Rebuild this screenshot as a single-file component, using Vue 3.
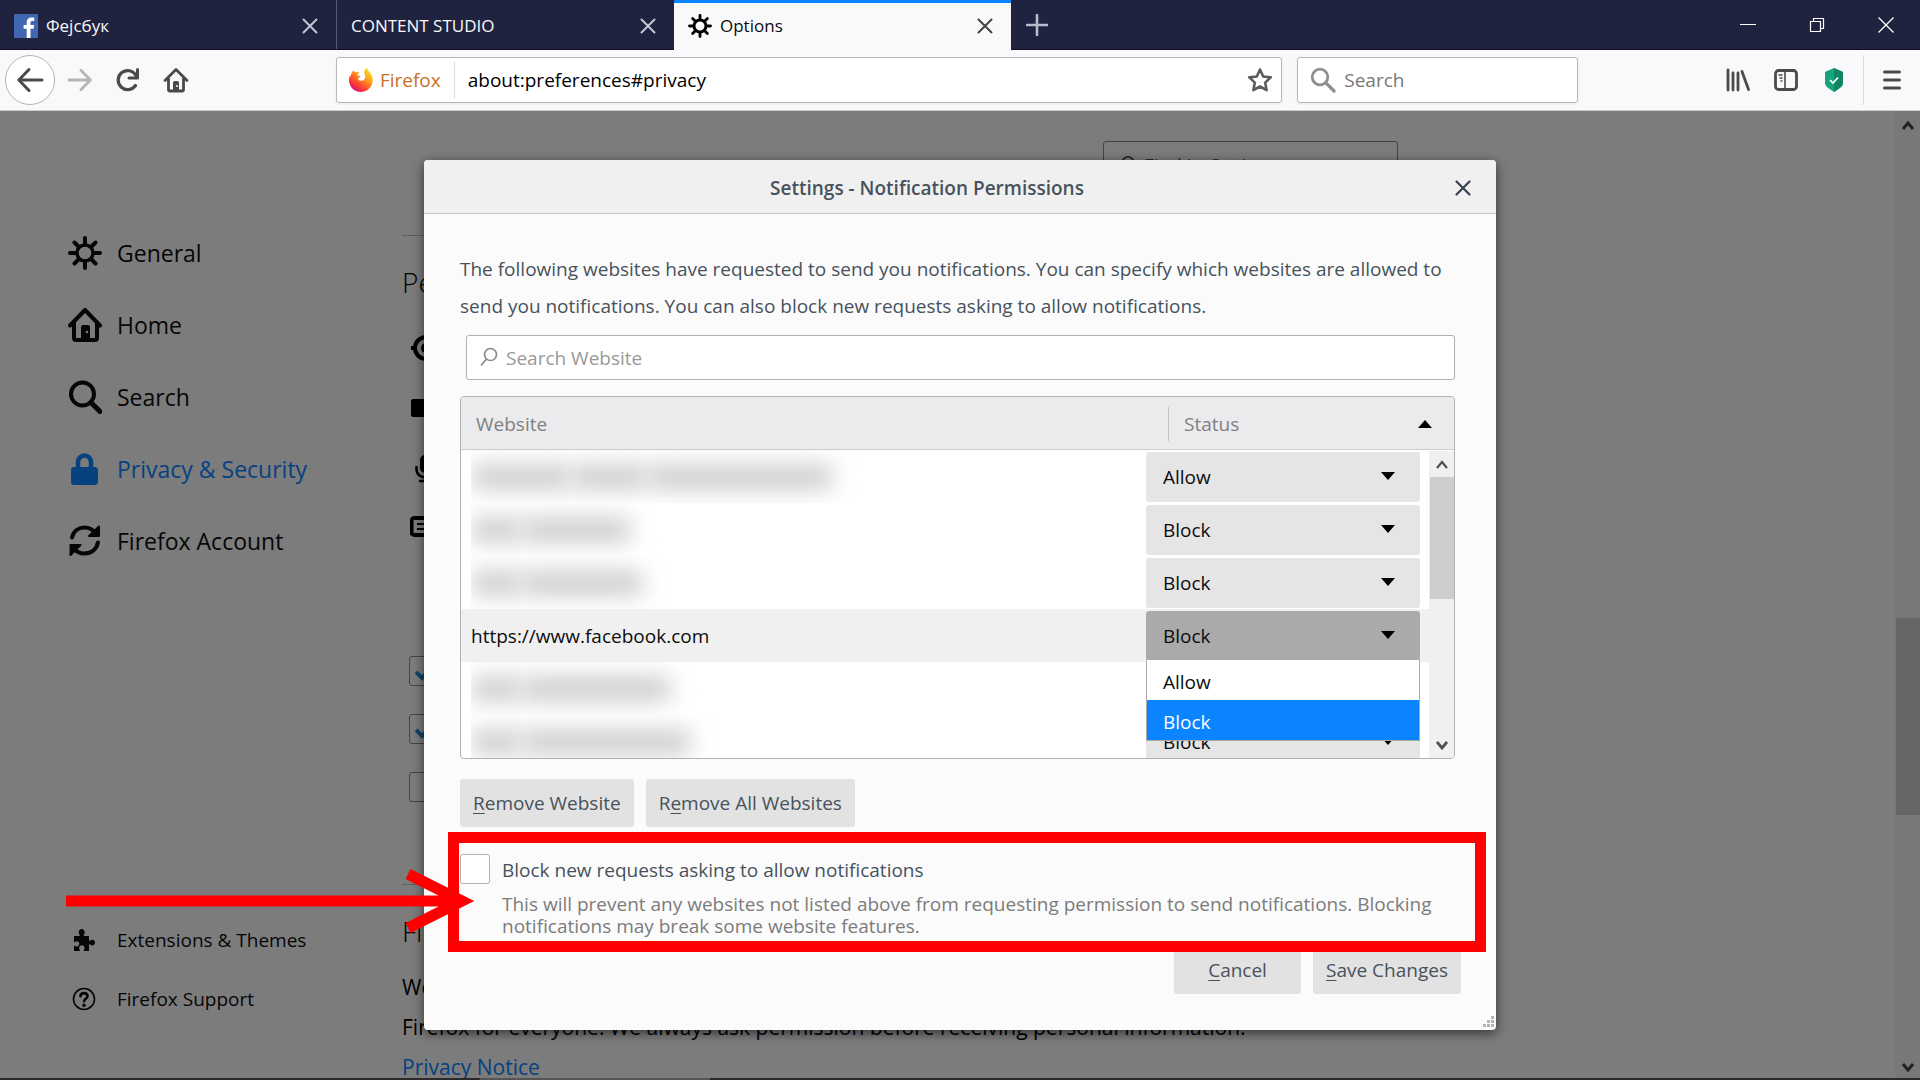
<template>
  <div class="browser">
    <header class="tab-bar">
      <div
        v-for="tab in tabs"
        :key="tab.title"
        :class="['tab', tab.active ? 'active' : '']"
      >
        <svg v-if="tab.icon === 'facebook'" class="favicon" viewBox="0 0 24 24">
          <rect width="24" height="24" rx="1" fill="#4267b2" />
          <path d="M16.5 24v-9.3h3.1l.5-3.6h-3.6V8.8c0-1 .3-1.8 1.8-1.8h1.9V3.7c-.3 0-1.5-.1-2.8-.1-2.8 0-4.7 1.7-4.7 4.8v2.7H9.6v3.6h3.1V24z" fill="#fff" />
        </svg>
        <svg v-if="tab.icon === 'gear'" class="favicon" viewBox="0 0 24 24">
          <circle cx="12" cy="12" r="6" fill="none" stroke="#000" stroke-width="3" />
          <path :d="gearTeeth" stroke="#000" stroke-width="2.8" stroke-linecap="round" />
        </svg>
        <span class="tab-title">{{ tab.title }}</span>
        <button class="tab-close" aria-label="Close tab">
          <svg width="16" height="16" viewBox="0 0 16 16">
            <path d="M1.5 1.5l13 13M14.5 1.5l-13 13" fill="none" stroke="currentColor" stroke-width="2" stroke-linecap="round" />
          </svg>
        </button>
      </div>
      <button class="new-tab" aria-label="New tab">
        <svg width="22" height="22" viewBox="0 0 22 22">
          <path d="M11 1v20M1 11h20" stroke="#b9bacb" stroke-width="2.6" stroke-linecap="round" />
        </svg>
      </button>
      <div class="window-controls">
        <button aria-label="Minimize">
          <svg width="16" height="16" viewBox="0 0 16 16"><path d="M0 7.5h16" stroke="#fff" /></svg>
        </button>
        <button aria-label="Restore">
          <svg width="16" height="16" viewBox="0 0 16 16">
            <path d="M1.5 4.5h10v10h-10zM4.5 4.5v-3h10v10h-3" fill="none" stroke="#fff" stroke-width="1.2" />
          </svg>
        </button>
        <button aria-label="Close">
          <svg width="16" height="16" viewBox="0 0 16 16"><path d="M.5.5l15 15M15.5.5l-15 15" stroke="#fff" stroke-width="1.3" /></svg>
        </button>
      </div>
    </header>

    <nav class="nav-bar">
      <button class="nav-button back" aria-label="Back">
        <svg width="28" height="28" viewBox="0 0 28 28">
          <path d="M26 14H3M13 3.5L2.8 14 13 24.5" fill="none" stroke="#4a4a4c" stroke-width="3" stroke-linecap="round" stroke-linejoin="round" />
        </svg>
      </button>
      <button class="nav-button" aria-label="Forward" disabled>
        <svg width="26" height="26" viewBox="0 0 28 28">
          <path d="M2 14h23M15 3.5L25.2 14 15 24.5" fill="none" stroke="#b5b5b7" stroke-width="3" stroke-linecap="round" stroke-linejoin="round" />
        </svg>
      </button>
      <button class="nav-button" aria-label="Reload">
        <svg width="26" height="26" viewBox="0 0 26 26">
          <path d="M20.5 18.5A9.5 9.5 0 1 1 21 8.5" fill="none" stroke="#4a4a4c" stroke-width="3.2" stroke-linecap="round" />
          <path d="M22.5 2.5v8.5h-8.5" fill="none" stroke="#4a4a4c" stroke-width="3" stroke-linecap="round" stroke-linejoin="round" />
        </svg>
      </button>
      <button class="nav-button" aria-label="Home">
        <svg width="26" height="26" viewBox="0 0 26 26">
          <path d="M2 13.5L13 2.5l11 11M5.5 12v10.5q0 1.5 1.5 1.5h12q1.5 0 1.5-1.5V12" fill="none" stroke="#4a4a4c" stroke-width="2.8" stroke-linecap="round" stroke-linejoin="round" />
          <path d="M10 23v-7.5q0-1.5 1.5-1.5h3q1.5 0 1.5 1.5V23z" fill="#4a4a4c" />
          <circle cx="14" cy="19" r="1" fill="#f9f9fb" />
        </svg>
      </button>
      <div class="spacer"></div>
      <div class="url-bar">
        <svg class="firefox-logo" viewBox="0 0 26 26">
          <defs>
            <linearGradient id="fox" x1="0.85" y1="0.05" x2="0.25" y2="0.95">
              <stop offset="0" stop-color="#ffe226" />
              <stop offset="0.4" stop-color="#ff9a1a" />
              <stop offset="0.7" stop-color="#ff4a2e" />
              <stop offset="1" stop-color="#e01171" />
            </linearGradient>
          </defs>
          <path d="M5.5 3.5c.8 1 1.8 1.5 3 1.8 1.3-.5 2-.4 3.2-.3-1.5 1-2.2 2-2.3 3.4l3 .5c.2 1.2-1.6 1.9-2.5 2.7.3 1.6 2 2.5 3.8 2.2 2.2-.3 3.5-1.9 3.5-3.9 0-2.2-1.4-3.3-1-5.6.2-1.8 1.6-3 3.2-3.6-.2 1.9 1 2.9 2.3 4.5 1.9 2.4 3 4.9 3 8 0 6.4-5.2 11.8-11.9 11.8S1 19.7 1 13.3c0-2 .4-3.4 1.1-5l.4 1.4c.4-2.6 1.4-4.4 3-6.2z" fill="url(#fox)" />
        </svg>
        <span class="identity">Firefox</span>
        <input class="url" type="text" aria-label="Address" value="about:preferences#privacy" />
        <button class="bookmark" aria-label="Bookmark">
          <svg width="26" height="26" viewBox="0 0 26 26">
            <path d="M13 2.5l3.2 7 7.5.9-5.5 5.2 1.4 7.6-6.6-3.7-6.6 3.7 1.4-7.6-5.5-5.2 7.5-.9z" fill="none" stroke="#5c5c5e" stroke-width="2.6" stroke-linejoin="round" />
          </svg>
        </button>
      </div>
      <div class="search-bar">
        <svg width="26" height="26" viewBox="0 0 26 26">
          <circle cx="10" cy="10" r="7.8" fill="none" stroke="#8f8f91" stroke-width="2.8" />
          <path d="M16 16l8 8" stroke="#8f8f91" stroke-width="3.2" stroke-linecap="round" />
        </svg>
        <input type="text" aria-label="Search the web" placeholder="Search" />
      </div>
      <div class="spacer"></div>
      <button class="tool" aria-label="Library">
        <svg width="24" height="24" viewBox="0 0 24 24">
          <path d="M2 2v20M7 5v17M12 5v17M16 3.5l6.5 18" stroke="#4a4a4c" stroke-width="2.8" stroke-linecap="round" />
        </svg>
      </button>
      <button class="tool" aria-label="Sidebars">
        <svg width="24" height="24" viewBox="0 0 24 24">
          <rect x="1.5" y="2.5" width="21" height="19" rx="3" fill="none" stroke="#4a4a4c" stroke-width="2.8" />
          <path d="M11 3v18" stroke="#4a4a4c" stroke-width="1.6" />
          <path d="M4.5 7h4M5.5 10h3M6.5 13h2" stroke="#4a4a4c" stroke-width="1.5" />
        </svg>
      </button>
      <button class="tool" aria-label="Protection">
        <svg width="20" height="24" viewBox="0 0 20 24">
          <path d="M10 0l9 4v11.5q0 3-9 8.5-9-5.5-9-8.5V4z" fill="#14a57c" />
          <path d="M10 0l9 4v11.5q0 3-9 8.5z" fill="#128466" />
          <path d="M6 12l3 3 5-5.5" fill="none" stroke="#fff" stroke-width="1.7" />
        </svg>
      </button>
      <button class="menu" aria-label="Menu">
        <svg width="18" height="20" viewBox="0 0 18 20">
          <path d="M1.5 2h15M1.5 10h15M1.5 18h15" stroke="#4a4a4c" stroke-width="3" stroke-linecap="round" />
        </svg>
      </button>
    </nav>

    <div class="content">
      <aside class="categories">
        <a
          v-for="item in categories"
          :key="item.label"
          href="#"
          :class="['category', item.selected ? 'selected' : '']"
        >
          <svg v-if="item.icon === 'gear'" viewBox="0 0 34 34">
            <circle cx="17" cy="17" r="8" fill="none" stroke="currentColor" stroke-width="3.5" />
            <path d="M17 2v6M17 26v6M2 17h6M26 17h6M6.5 6.5l4 4M23.5 23.5l4 4M6.5 27.5l4-4M23.5 10.5l4-4" stroke="currentColor" stroke-width="4" stroke-linecap="round" />
          </svg>
          <svg v-if="item.icon === 'home'" viewBox="0 0 34 34">
            <path d="M2 17.5L17 2l15 15.5M6 15v15q0 2 2 2h19q2 0 2-2V15" fill="none" stroke="currentColor" stroke-width="4" stroke-linecap="round" stroke-linejoin="round" />
            <path d="M13 32V19q0-2 2-2h5q2 0 2 2v13z" fill="currentColor" />
            <circle cx="19" cy="24" r="1.3" fill="#f9f9fb" />
          </svg>
          <svg v-if="item.icon === 'search'" viewBox="0 0 34 34">
            <circle cx="14.5" cy="14" r="11.5" fill="none" stroke="currentColor" stroke-width="4" />
            <path d="M23 22.5l9 9" stroke="currentColor" stroke-width="5" stroke-linecap="round" />
          </svg>
          <svg v-if="item.icon === 'lock'" viewBox="0 0 34 34">
            <path d="M10 17V10a6.5 6.5 0 0 1 13 0v7" fill="none" stroke="currentColor" stroke-width="4.5" />
            <rect x="3" y="15" width="27" height="18" rx="3" fill="currentColor" />
          </svg>
          <svg v-if="item.icon === 'sync'" viewBox="0 0 34 34">
            <path d="M4 13.5C5.5 7 10.5 3.5 16.5 3.5c5 0 8.500 2 11.500 6M30 18.500c-1.500 7-7 11-13.500 11-5 0-8.500-2-11.500-6" fill="none" stroke="currentColor" stroke-width="4" stroke-linecap="round" />
            <path d="M21 12h10V2.500zM12.500 21h-10v10z" fill="currentColor" stroke="currentColor" stroke-width="2" stroke-linejoin="round" />
          </svg>
          <span>{{ item.label }}</span>
        </a>
        <div class="links">
          <a href="#" class="link">
            <svg viewBox="0 0 24 24">
              <path d="M2 8h5.5c1-.8-.8-2-.8-3.8C6.7 2.5 8 1 9.7 1s3 1.5 3 3.2c0 1.800-1.700 3-.7 3.800h5v4.500c.8 1 1.700-.8 3.400-.8 1.500 0 2.600 1.200 2.600 2.800s-1.100 2.900-2.600 2.900c-1.700 0-2.600-1.700-3.400-.8V23h-5c-1-.8.5-1.800.5-3.300 0-1.400-1.200-2.500-2.700-2.500s-2.700 1.100-2.700 2.500c0 1.500 1.400 2.500.5 3.300H2v-5c.8-1 1.500.4 2.800.4 1.400 0 2.500-1.200 2.500-2.600s-1.100-2.600-2.500-2.600c-1.300 0-2 1.500-2.800.6z" fill="currentColor" />
            </svg>
            <span>Extensions &amp; Themes</span>
          </a>
          <a href="#" class="link">
            <svg viewBox="0 0 24 24">
              <circle cx="12" cy="12" r="10.5" fill="none" stroke="currentColor" stroke-width="1.6" />
              <path d="M8.5 9.3c0-4.3 7-4.3 7 0 0 2.5-3.4 2.5-3.4 5" fill="none" stroke="currentColor" stroke-width="2.6" stroke-linecap="round" />
              <circle cx="12" cy="18.2" r="1.8" fill="currentColor" />
            </svg>
            <span>Firefox Support</span>
          </a>
        </div>
      </aside>

      <main class="pane">
        <label class="find">
          <svg width="18" height="18" viewBox="0 0 18 18">
            <circle cx="10" cy="7" r="6" fill="none" stroke="#555" stroke-width="2" />
            <path d="M6 11.5l-5 5" stroke="#555" stroke-width="2" />
          </svg>
          <input type="text" placeholder="Find in Options" />
        </label>
        <section class="group">
          <h2>Permissions</h2>
          <div class="permission">
            <svg width="32" height="32" viewBox="0 0 32 32">
              <circle cx="16" cy="16" r="11" fill="none" stroke="#000" stroke-width="4" />
              <circle cx="16" cy="16" r="5" />
              <path d="M16 1v5M16 26v5M1 16h5M26 16h5" stroke="#000" stroke-width="4" />
            </svg>
          </div>
          <div class="permission">
            <svg width="32" height="32" viewBox="0 0 32 32"><rect x="1" y="7" width="22" height="18" rx="2" /><path d="M23 14l8-6v16l-8-6z" /></svg>
          </div>
          <div class="permission">
            <svg width="32" height="32" viewBox="0 0 32 32">
              <rect x="10" y="3" width="10" height="18" rx="5" />
              <path d="M6.5 14v3c0 11 17 11 17 0v-3M15 25v4M9 29h12" fill="none" stroke="#000" stroke-width="2.5" />
            </svg>
          </div>
          <div class="permission">
            <svg width="32" height="32" viewBox="0 0 32 32">
              <rect x="1.5" y="6" width="28" height="17" rx="3" fill="none" stroke="#000" stroke-width="4" />
              <path d="M7 12h16M7 17h12" stroke="#000" stroke-width="2" />
            </svg>
          </div>
        </section>
        <section class="options">
          <div v-for="(checked, i) in pageOptions" :key="i" class="option">
            <input type="checkbox" :checked="checked" :aria-label="'Option ' + (i + 1)" />
            <svg v-if="checked" class="check" width="18" height="16" viewBox="0 0 18 16">
              <path d="M1 6l6 6 10-10" fill="none" stroke="#1c8fd0" stroke-width="4" />
            </svg>
          </div>
        </section>
        <section class="group">
          <h2>Firefox Data Collection and Use</h2>
          <p>
            We strive to provide you with choices and collect only what we need to provide and improve<br />
            Firefox for everyone. We always ask permission before receiving personal information.<br />
            <a href="#">Privacy Notice</a>
          </p>
        </section>
      </main>

      <div class="page-scroll">
        <svg width="12" height="10" viewBox="0 0 12 10"><path d="M1 8l5-6 5 6" fill="none" stroke="#444" stroke-width="3" /></svg>
        <div class="page-thumb"></div>
        <svg width="12" height="10" viewBox="0 0 12 10"><path d="M1 2l5 6 5-6" fill="none" stroke="#444" stroke-width="3" /></svg>
      </div>

      <div class="overlay">
        <div class="dialog" role="dialog" aria-labelledby="dialog-title">
          <div class="dialog-header">
            <h1 id="dialog-title">Settings - Notification Permissions</h1>
            <button aria-label="Close dialog">
              <svg width="16" height="16" viewBox="0 0 16 16"><path d="M1.5 1.5l13 13M14.5 1.5l-13 13" stroke="#38424d" stroke-width="2.2" stroke-linecap="round" /></svg>
            </button>
          </div>
          <div class="dialog-body">
            <p class="intro">
              The following websites have requested to send you notifications. You can specify which websites are allowed to send you notifications. You can also block new requests asking to allow notifications.
            </p>
            <label class="site-search">
              <svg width="18" height="22" viewBox="0 0 18 22">
                <circle cx="10.5" cy="7.5" r="6" fill="none" stroke="#8a8a8c" stroke-width="1.7" />
                <path d="M6.5 12L1 18.5" stroke="#8a8a8c" stroke-width="1.7" />
              </svg>
              <input type="text" placeholder="Search Website" />
            </label>

            <div class="site-list">
              <table>
                <colgroup>
                  <col />
                  <col class="col-status" />
                  <col class="col-scroll" />
                </colgroup>
                <thead>
                  <tr>
                    <th>Website</th>
                    <th colspan="2">
                      <div class="status-head">
                        <span>Status</span>
                        <svg width="14" height="8" viewBox="0 0 14 8"><path d="M0 8l7-8 7 8z" /></svg>
                      </div>
                    </th>
                  </tr>
                </thead>
                <tbody>
                  <tr v-for="(site, i) in sites" :key="i" :class="{ selected: site.url }">
                    <td>
                      <span v-if="site.url">{{ site.url }}</span>
                      <div v-else class="hidden-site">
                        <i v-for="(w, n) in site.bars" :key="n" :style="{ width: w + 'px' }"></i>
                      </div>
                    </td>
                    <td class="status">
                      <select :aria-label="'Status ' + (i + 1)" :value="site.status">
                        <option>Allow</option>
                        <option>Block</option>
                      </select>
                      <svg class="caret" width="14" height="8" viewBox="0 0 14 8"><path d="M0 0h14l-7 8z" /></svg>
                      <ul v-if="site.url" class="popup" role="listbox" aria-label="Status">
                        <li role="option">Allow</li>
                        <li role="option" class="current" aria-selected="true">Block</li>
                      </ul>
                    </td>
                    <td></td>
                  </tr>
                </tbody>
              </table>
              <div class="list-scroll">
                <svg width="12" height="10" viewBox="0 0 12 10"><path d="M1 8l5-6 5 6" fill="none" stroke="#505050" stroke-width="2.2" /></svg>
                <div class="list-thumb"></div>
                <svg width="12" height="10" viewBox="0 0 12 10"><path d="M1 2l5 6 5-6" fill="none" stroke="#505050" stroke-width="2.8" /></svg>
              </div>
            </div>

            <div class="buttons">
              <button><u>R</u>emove Website</button>
              <button>R<u>e</u>move All Websites</button>
            </div>

            <div class="block-new">
              <input id="block-new" type="checkbox" />
              <div>
                <label for="block-new">Block new requests asking to allow notifications</label>
                <p>This will prevent any websites not listed above from requesting permission to send notifications. Blocking notifications may break some website features.</p>
              </div>
              <div class="highlight"></div>
              <svg class="arrow" width="410" height="70" viewBox="0 0 410 70">
                <path d="M0 35h392M342 8l54 27-54 27" fill="none" stroke="#f00" stroke-width="11" />
              </svg>
            </div>

            <div class="buttons end">
              <button class="cancel"><u>C</u>ancel</button>
              <button><u>S</u>ave Changes</button>
            </div>
          </div>
          <svg class="grip" width="12" height="12" viewBox="0 0 12 12">
            <path d="M9 0h3v3h-3zM9 4h3v3h-3zM9 8h3v3h-3zM5 4h3v3h-3zM5 8h3v3h-3zM1 8h3v3h-3z" fill="#b5b5b5" />
          </svg>
        </div>
      </div>
    </div>
    <footer class="edge"></footer>
  </div>
</template>

<script setup>
const tabs = [
  { title: 'Фејсбук', icon: 'facebook' },
  { title: 'CONTENT STUDIO' },
  { title: 'Options', icon: 'gear', active: true }
];

const gearTeeth = 'M12 1.5v4M12 18.5v4M1.5 12h4M18.5 12h4M4.6 4.6l2.5 2.5M16.9 16.9l2.5 2.5M4.6 19.4l2.5-2.5M16.9 7.1l2.5-2.5';

const categories = [
  { label: 'General', icon: 'gear' },
  { label: 'Home', icon: 'home' },
  { label: 'Search', icon: 'search' },
  { label: 'Privacy & Security', icon: 'lock', selected: true },
  { label: 'Firefox Account', icon: 'sync' }
];

const pageOptions = [true, true, false];

// bars are the widths of the blurred words
const sites = [
  { bars: [100, 76, 186], status: 'Allow' },
  { bars: [50, 110], status: 'Block' },
  { bars: [50, 122], status: 'Block' },
  { url: 'https://www.facebook.com', status: 'Block' },
  { bars: [50, 150], status: 'Block' },
  { bars: [50, 170], status: 'Block' }
];
</script>

<style>
body {
  margin: 0;
}
</style>

<style scoped>
.browser {
  display: flex;
  flex-direction: column;
  height: 100vh;
  overflow: hidden;
  font-family: "Open Sans", "Noto Sans", sans-serif;
  font-size: 19px;
  color: #000;
}

.browser * {
  box-sizing: border-box;
}

button,
input,
select {
  font: inherit;
  color: inherit;
}

button {
  padding: 0;
  border: none;
  background: none;
}

input {
  min-width: 0;
  padding: 0;
  border: none;
  outline: none;
  background: none;
}

svg {
  display: block;
  flex: none;
}

.tab-bar {
  display: flex;
  flex: none;
  height: 50px;
  background-color: #20233f;
  border-bottom: 1px solid #0f1028;
  color: #f9f9fa;
  font-size: 17px;
}

.tab {
  display: flex;
  align-items: center;
  gap: 8px;
  width: 337px;
  padding: 2px 18px 0 14px;
  border-right: 1px solid #5a5c74;
}

.tab.active {
  height: 50px;
  padding: 0 18px 2px 14px;
  background-color: #f9f9fb;
  border-top: 3px solid #0a84ff;
  border-right: none;
  color: #0c0c0d;
}

.tab:nth-child(2) {
  border-right: none;
}

.favicon {
  width: 24px;
  height: 24px;
}

.tab-title {
  flex: 1;
}

.tab-close {
  color: #c4c5d3;
}

.active .tab-close {
  color: #444;
}

.new-tab {
  margin-left: 15px;
}

.window-controls {
  display: flex;
  margin-left: auto;
}

.window-controls button {
  display: flex;
  align-items: center;
  justify-content: center;
  width: 69px;
}

.nav-bar {
  display: flex;
  flex: none;
  align-items: center;
  height: 61px;
  padding-left: 5px;
  background-color: #f9f9fb;
  border-bottom: 1px solid #ccc;
}

.nav-button,
.tool,
.menu {
  display: flex;
  align-items: center;
  justify-content: center;
  width: 48px;
  height: 50px;
}

.back {
  width: 50px;
  margin-right: 1px;
  border: 1px solid #b5b5ad;
  border-radius: 50%;
  background-color: #fff;
}

.spacer {
  flex: 136;
}

.url-bar,
.search-bar {
  display: flex;
  align-items: center;
  min-width: 0;
  height: 46px;
  background-color: #fff;
  border: 1px solid #b8b8b4;
  border-radius: 3px;
  box-shadow: 0 1px 3px rgba(0, 0, 0, 0.06);
}

.url-bar {
  flex: 926;
  padding: 0 8px 0 11px;
}

.firefox-logo {
  width: 26px;
  height: 26px;
}

.identity {
  padding: 6px 13px 6px 6px;
  border-right: 1px solid #ddd;
  color: #c9712b;
}

.url {
  flex: 1;
  padding-left: 13px;
}

.search-bar {
  flex: 255;
  gap: 8px;
  margin-left: 15px;
  padding: 0 12px;
}

.search-bar input {
  flex: 1;
}

.search-bar input::placeholder {
  color: #777;
  opacity: 1;
}

.menu {
  width: 57px;
  margin-left: 5px;
  border-left: 1px solid #ddd;
}

.content {
  position: relative;
  display: flex;
  flex: 1;
  min-height: 0;
  overflow: hidden;
  background-color: #f9f9fb;
}

.categories {
  display: flex;
  flex: 0 0 402px;
  flex-direction: column;
  padding: 106px 0 50px 68px;
}

.category,
.link {
  display: flex;
  align-items: center;
  color: #0c0c0d;
  text-decoration: none;
}

.category {
  gap: 15px;
  height: 72px;
  font-size: 23px;
}

.category svg {
  width: 34px;
  height: 34px;
}

.category.selected {
  color: #0a84ff;
}

.links {
  margin-top: auto;
}

.link {
  gap: 21px;
  height: 59px;
  padding-left: 4px;
}

.link svg {
  width: 24px;
  height: 24px;
}

.pane {
  flex: 0 1 996px;
  height: 0;
  white-space: nowrap;
}

.find {
  display: flex;
  align-items: center;
  gap: 8px;
  width: 295px;
  height: 48px;
  margin: 30px 0 46px auto;
  padding: 0 14px;
  border: 1px solid #888;
  border-radius: 3px;
}

.find input {
  width: 200px;
}

.find input::placeholder {
  color: #555;
}

.group {
  border-top: 1px solid #bbb;
}

.group h2 {
  margin: 26px 0 16px;
  font-size: 28px;
  font-weight: 300;
  line-height: 40px;
}

.group p {
  margin: 0;
  font-size: 21px;
  line-height: 40px;
}

.group a {
  color: #0a84ff;
  text-decoration: none;
}

.permission {
  display: flex;
  align-items: center;
  height: 60px;
  padding-left: 8px;
}

.options {
  margin: 84px 0 68px;
}

.option {
  position: relative;
  display: flex;
  align-items: center;
  height: 58px;
  padding-left: 7px;
}

.option input {
  appearance: none;
  width: 30px;
  height: 30px;
  margin: 0;
  border: 1px solid #888;
  border-radius: 3px;
}

.check {
  position: absolute;
  top: 24px;
  left: 13px;
}

.page-scroll {
  display: flex;
  flex-direction: column;
  align-items: center;
  width: 25px;
  margin-left: auto;
  padding: 10px 0 6px;
  background-color: #f0f0f0;
}

.page-thumb {
  width: 24px;
  height: 197px;
  margin: auto 0 247px;
  background-color: #cdcdcd;
}

.overlay {
  position: absolute;
  inset: 0;
  display: flex;
  align-items: center;
  justify-content: center;
  background-color: rgba(0, 0, 0, 0.5);
}

.dialog {
  position: relative;
  width: 100%;
  max-width: 1072px;
  background-color: #fbfbfb;
  border-radius: 4px;
  box-shadow: 0 3px 12px rgba(0, 0, 0, 0.6);
  color: #47525c;
}

.dialog-header {
  display: flex;
  align-items: center;
  height: 54px;
  padding-top: 3px;
  background-color: #f0f0f0;
  border-bottom: 1px solid #c4c4c4;
  border-radius: 4px 4px 0 0;
}

.dialog-header h1 {
  flex: 1;
  margin: 0;
  font-size: 19px;
  font-weight: 600;
  text-align: center;
}

.dialog-header button {
  display: flex;
  justify-content: center;
  width: 66px;
}

.dialog-body {
  padding: 37px 35px 36px 36px;
}

.intro {
  margin: 0 0 10px;
  line-height: 37px;
}

.site-search {
  display: flex;
  gap: 8px;
  align-items: center;
  height: 45px;
  margin: 0 6px 16px;
  padding: 2px 13px 0;
  background-color: #fff;
  border: 1px solid #b1b1b1;
  border-radius: 3px;
}

.site-search input {
  flex: 1;
}

.site-search input::placeholder {
  color: #999;
}

.site-list {
  position: relative;
  height: 363px;
  margin-right: 6px;
  overflow: hidden;
  background-color: #fff;
  border: 1px solid #b1b1b1;
  border-radius: 4px;
}

table {
  width: 100%;
  border-collapse: collapse;
  table-layout: fixed;
  color: #0c0c0d;
}

.col-status {
  width: 274px;
}

.col-scroll {
  width: 34px;
}

th {
  height: 53px;
  padding: 3px 15px 0;
  background-color: #ebebed;
  border-bottom: 1px solid #ccc;
  color: #808080;
  font-weight: 400;
  text-align: left;
}

th:last-child {
  padding: 3px 22px 0;
}

.status-head {
  display: flex;
  align-items: center;
  justify-content: space-between;
  padding-left: 15px;
  border-left: 1px solid #c4c4c4;
  color: #808080;
  line-height: 34px;
}

td {
  height: 53px;
  padding: 0 0 0 10px;
}

tr.selected td {
  background-color: #f0f0f0;
}

.hidden-site {
  display: flex;
  align-items: center;
  height: 53px;
  overflow: hidden;
}

.hidden-site i {
  height: 26px;
  background-color: #cfcfcf;
  border-radius: 8px;
  filter: blur(11px);
}

td.status {
  position: relative;
  padding: 0;
}

.status select {
  display: block;
  appearance: none;
  width: 100%;
  height: 50px;
  padding: 0 17px;
  background-color: #e5e5e5;
  border: none;
  border-radius: 3px;
}

.selected .status select {
  background-color: #aaa;
}

.caret {
  position: absolute;
  top: 22px;
  right: 25px;
}

.popup {
  position: absolute;
  top: 51px;
  left: 0;
  z-index: 1;
  width: 100%;
  margin: 0;
  padding: 0;
  background-color: #fff;
  border: 1px solid #aaa;
  border-top: none;
  list-style: none;
}

.popup li {
  height: 40px;
  padding: 0 16px;
  line-height: 44px;
}

.popup .current {
  background-color: #0a84ff;
  color: #fff;
}

.list-scroll {
  position: absolute;
  top: 54px;
  right: 0;
  bottom: 0;
  display: flex;
  flex-direction: column;
  align-items: center;
  width: 25px;
  padding: 9px 0 8px;
  background-color: #f0f0f0;
}

.list-thumb {
  width: 24px;
  height: 122px;
  margin: 7px 0 auto;
  background-color: #cdcdcd;
}

.buttons {
  display: flex;
  gap: 12px;
  margin-top: 20px;
}

.buttons button {
  height: 48px;
  padding: 0 13px;
  background-color: #e2e2e2;
  border-radius: 3px;
}

.buttons .cancel {
  width: 127px;
}

u {
  text-underline-offset: 3px;
}

.buttons.end {
  justify-content: flex-end;
  margin-top: 9px;
}

.block-new {
  position: relative;
  display: flex;
  gap: 12px;
  margin-top: 27px;
}

.block-new input {
  appearance: none;
  flex: none;
  width: 30px;
  height: 30px;
  margin: 0;
  background-color: #fff;
  border: 1px solid #b1b1b1;
  border-radius: 3px;
}

.block-new label {
  display: block;
  line-height: 32px;
}

.block-new p {
  margin: 7px 0 0;
  color: #7b7b7b;
  line-height: 22px;
}

/* sits over the option and the edges of the buttons next to it */
.highlight {
  position: absolute;
  inset: -22px -25px -15px -12px;
  z-index: 1;
  border: 11px solid #f00;
  pointer-events: none;
}

.arrow {
  position: absolute;
  top: 12px;
  left: -394px;
  z-index: 1;
  pointer-events: none;
}

.grip {
  position: absolute;
  right: 2px;
  bottom: 2px;
}

.edge {
  flex: none;
  height: 2px;
  background: linear-gradient(to right, #2a2a2c 25%, #555 25% 37%, #2a2a2c 37%);
}
</style>
